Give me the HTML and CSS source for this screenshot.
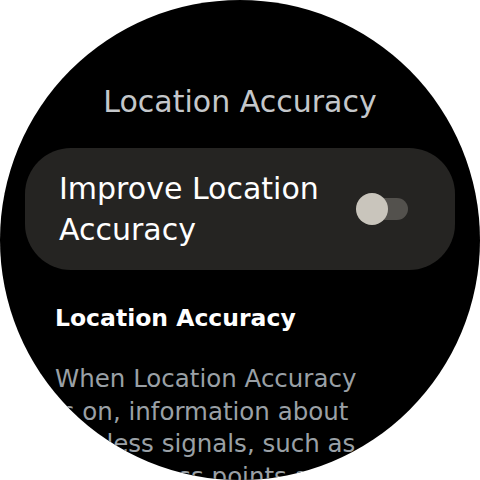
FILE: index.html
```html
<!DOCTYPE html>
<html>
<head>
<meta charset="utf-8">
<link rel="stylesheet" href="styles.css">
</head>
<body>
<div class="watch">
  <div class="screen">
    <h1 class="title">Location Accuracy</h1>
    <div class="chip">
      <span class="chip-label">Improve Location Accuracy</span>
      <span class="toggle"><span class="thumb"></span></span>
    </div>
    <h2 class="section">Location Accuracy</h2>
    <p class="body-text">When Location Accuracy is on, information about wireless signals, such as Wi-Fi access points and cell towers, is collected.</p>
  </div>
</div>
</body>
</html>
```
FILE: styles.css
```css
html, body {
  margin: 0;
  padding: 0;
  background: #ffffff;
}
.watch {
  width: 480px;
  height: 480px;
  border-radius: 50%;
  background: #000000;
  overflow: hidden;
}
.screen {
  display: flex;
  flex-direction: column;
  padding: 84px 25px 0 25px;
  font-family: "DejaVu Sans", "Open Sans", sans-serif;
}
.title {
  margin: 0;
  text-align: center;
  font-size: 30px;
  font-weight: 400;
  line-height: 36px;
  color: #c4c7ca;
}
.chip {
  margin-top: 28px;
  height: 122px;
  border-radius: 46px;
  background: #252422;
  display: flex;
  align-items: center;
  justify-content: space-between;
  padding: 0 47px 0 34px;
  box-sizing: border-box;
}
.chip-label {
  width: 272px;
  font-size: 30px;
  line-height: 41px;
  color: #ffffff;
}
.toggle {
  position: relative;
  width: 48px;
  height: 22px;
  border-radius: 11px;
  background: #53514d;
}
.thumb {
  position: absolute;
  left: -4px;
  top: -5px;
  width: 32px;
  height: 32px;
  border-radius: 50%;
  background: #c9c5bc;
}
.section {
  margin: 32px 0 0 30px;
  font-size: 23.5px;
  font-weight: 700;
  line-height: 32px;
  color: #ffffff;
}
.body-text {
  margin: 29px 0 0 30px;
  width: 315px;
  font-size: 24.5px;
  line-height: 32.5px;
  color: #9aa0a6;
}
```
